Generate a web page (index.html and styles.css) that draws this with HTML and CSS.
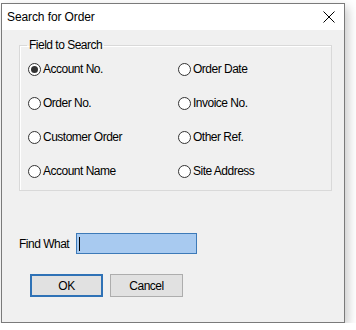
FILE: index.html
```html
<!DOCTYPE html>
<html>
    <head>
        <title>Search for Order</title>
        <link rel="stylesheet" href="styles.css">
    </head>
    <body>
        <div class="dialog">
            <div class="title-bar">
                <span class="title">Search for Order</span>
                <svg class="close-icon" viewBox="0 0 12 12">
                    <!-- Close cross -->
                    <path d="M 0.5 0.5 L 11.5 11.5 M 11.5 0.5 L 0.5 11.5"
                        stroke="#000" stroke-width="1" fill="none" />
                </svg>
            </div>
            <div class="dialog-body">
                <fieldset class="group-box">
                    <legend>Field to Search</legend>
                    <div class="radio-grid">
                        <label class="radio-item"><input type="radio" name="field" checked> Account No.</label>
                        <label class="radio-item"><input type="radio" name="field"> Order Date</label>
                        <label class="radio-item"><input type="radio" name="field"> Order No.</label>
                        <label class="radio-item"><input type="radio" name="field"> Invoice No.</label>
                        <label class="radio-item"><input type="radio" name="field"> Customer Order</label>
                        <label class="radio-item"><input type="radio" name="field"> Other Ref.</label>
                        <label class="radio-item"><input type="radio" name="field"> Account Name</label>
                        <label class="radio-item"><input type="radio" name="field"> Site Address</label>
                    </div>
                </fieldset>

                <div class="find-row">
                    <span class="find-label">Find What</span>
                    <div class="find-input"><span class="caret"></span></div>
                </div>

                <div class="button-row">
                    <button class="btn btn-default">OK</button>
                    <button class="btn">Cancel</button>
                </div>
            </div>
        </div>
    </body>
</html>
```

FILE: styles.css
```css
body {
    margin: 0;
    padding: 0;
    background: #fff;
    font-family: 'Liberation Sans', Arial, sans-serif;
    color: #000;
}

.dialog {
    width: 342px;
    height: 318px;
    margin: 3px 0 0 1px;
    border: 1px solid #7a7a7a;
    background: #f0f0f0;
    box-shadow: 3px 4px 10px rgba(0, 0, 0, 0.22);
    display: flex;
    flex-direction: column;
}

.title-bar {
    height: 26px;
    background: #fff;
    display: flex;
    align-items: center;
    justify-content: space-between;
    padding: 0 9px 0 5px;
}

.title {
    font-family: 'Liberation Sans', Arial, sans-serif;
    font-size: 12px;
    letter-spacing: -0.1px;
}

.close-icon {
    width: 12px;
    height: 12px;
}

.dialog-body {
    padding: 8px 0 0 17px;
    font-size: 12px;
    letter-spacing: -0.5px;
}

.group-box {
    width: 304px;
    margin: 0;
    padding: 0 0 2px 7px;
    border: 1px solid #d9d9d9;
    box-shadow: inset 1px 1px 0 #fff;
}

.group-box legend {
    padding: 0 2px;
    height: 14px;
    line-height: 14px;
}

.radio-grid {
    display: grid;
    grid-template-columns: 150px 1fr;
    grid-auto-rows: 34px;
}

.radio-item {
    display: flex;
    align-items: center;
    gap: 2px;
}

.radio-item input {
    appearance: none;
    -webkit-appearance: none;
    width: 13px;
    height: 13px;
    margin: 0 0 0 1px;
    border: 1px solid #333;
    border-radius: 50%;
    background: #fff;
    display: flex;
    align-items: center;
    justify-content: center;
}

.radio-item input:checked::after {
    content: '';
    width: 7px;
    height: 7px;
    border-radius: 50%;
    background: #333;
}

.find-row {
    display: flex;
    align-items: center;
    gap: 7px;
    margin-top: 42px;
}

.find-label {
    width: 50px;
    white-space: nowrap;
    flex-shrink: 0;
}

.find-input {
    width: 117px;
    height: 19px;
    border: 1px solid #3d7ab8;
    background: #a8caf0;
    display: flex;
    align-items: center;
    padding-left: 2px;
}

.caret {
    width: 1px;
    height: 14px;
    background: #000;
}

.button-row {
    display: flex;
    gap: 7px;
    margin: 20px 0 0 11px;
}

.btn {
    width: 73px;
    height: 23px;
    padding: 0;
    border: 1px solid #adadad;
    background: #e1e1e1;
    font-family: inherit;
    font-size: 12px;
    letter-spacing: -0.5px;
    color: #000;
}

.btn-default {
    border: 2px solid #2f72b6;
}
```
